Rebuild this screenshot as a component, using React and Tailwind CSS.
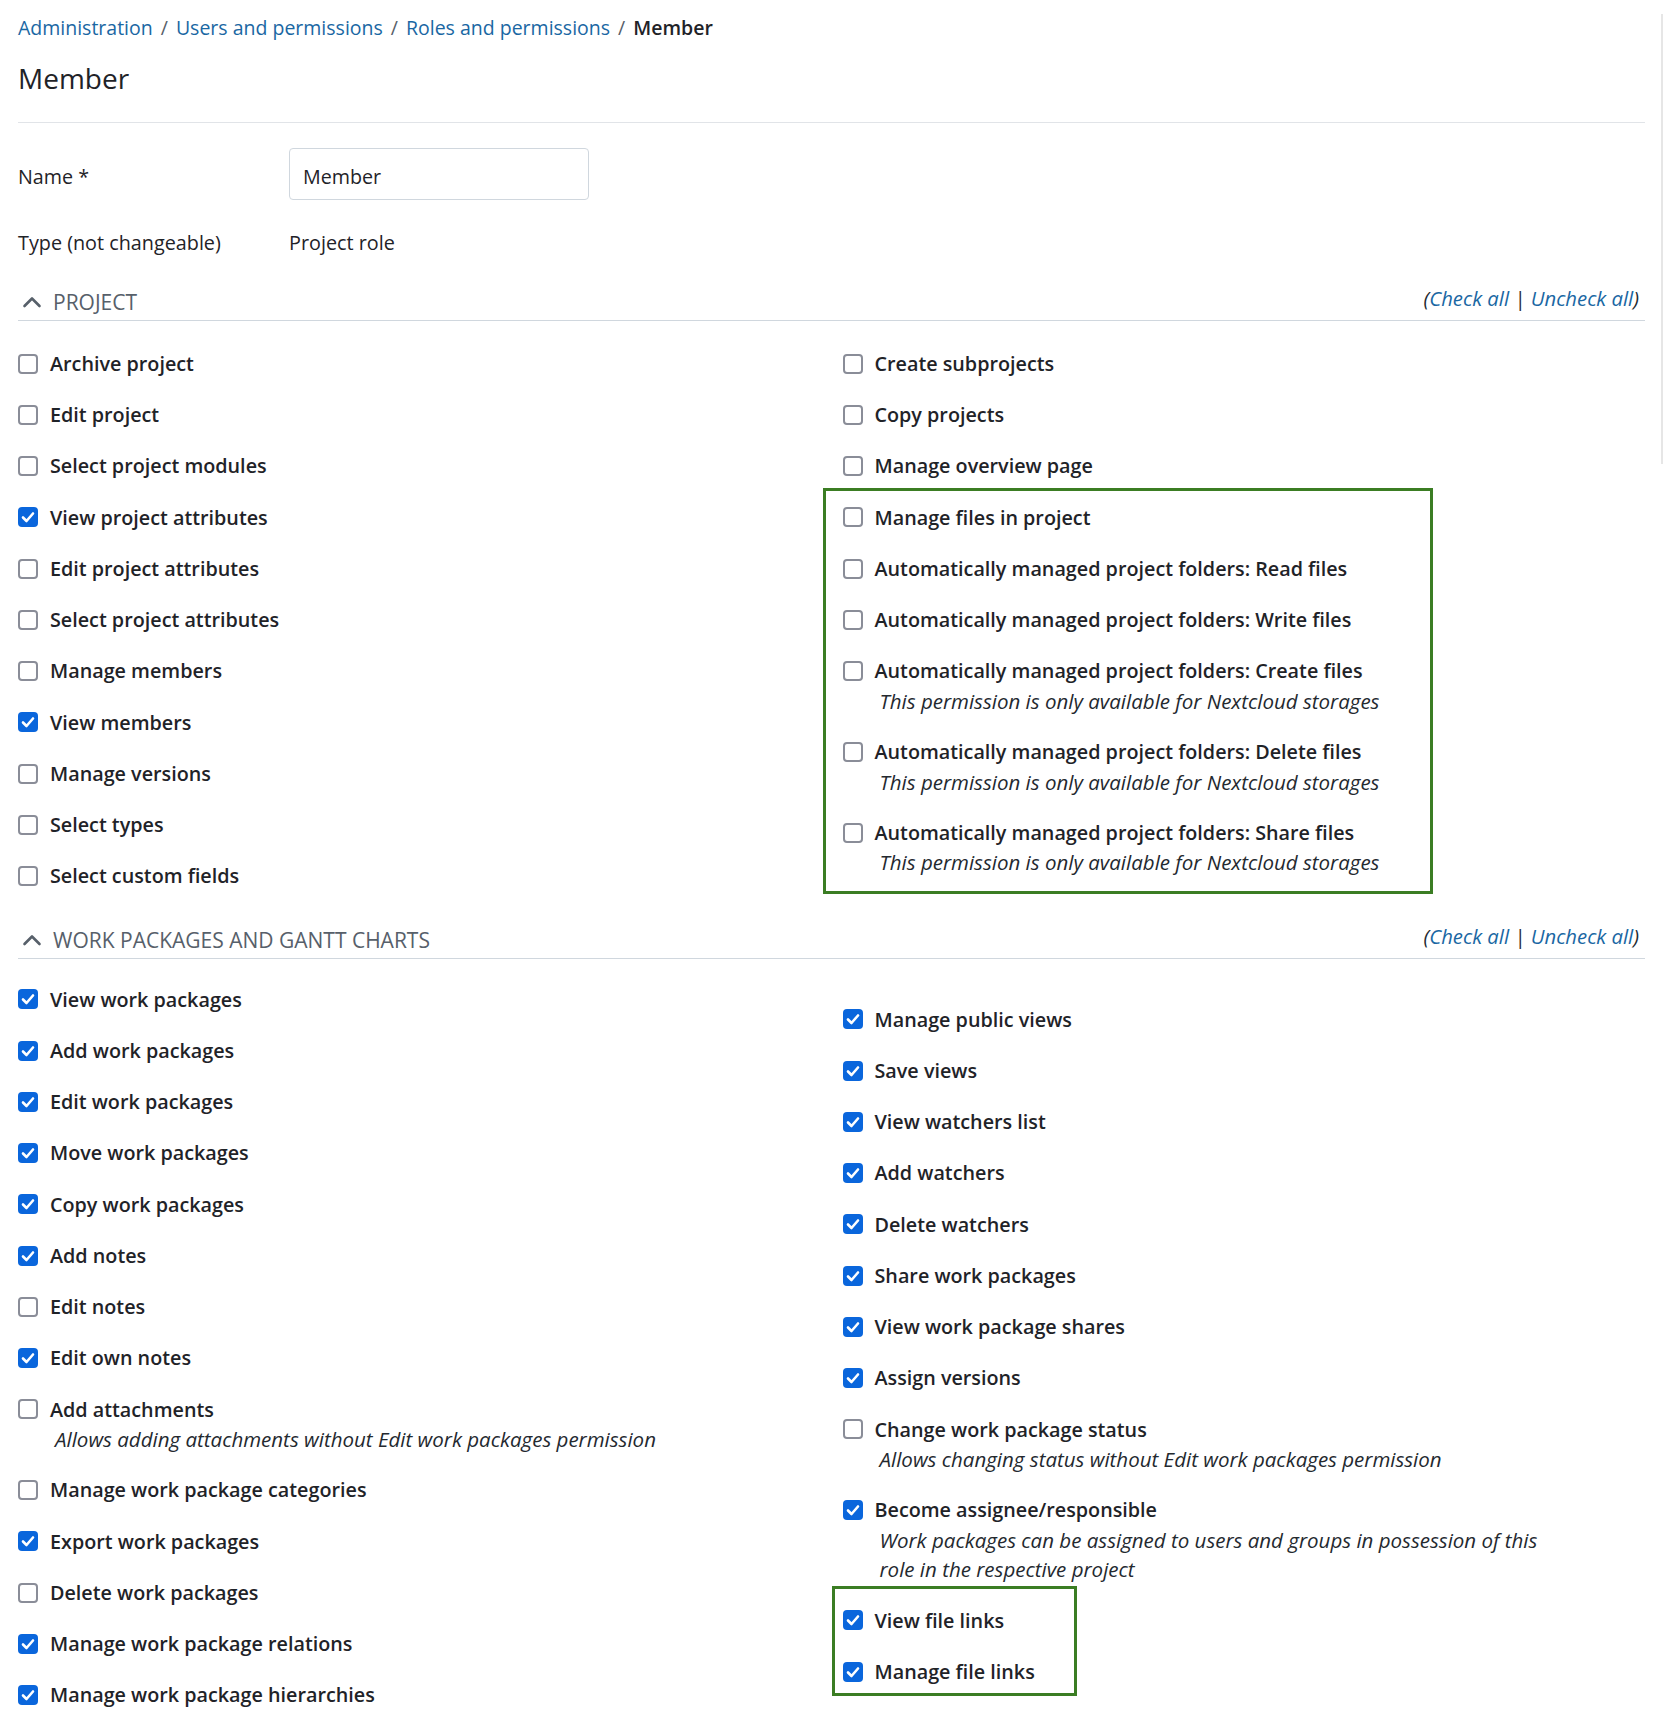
import React from "react";

const sec1Left = [
  ["Archive project", false],
  ["Edit project", false],
  ["Select project modules", false],
  ["View project attributes", true],
  ["Edit project attributes", false],
  ["Select project attributes", false],
  ["Manage members", false],
  ["View members", true],
  ["Manage versions", false],
  ["Select types", false],
  ["Select custom fields", false],
];

const sec1RightTop = [
  ["Create subprojects", false],
  ["Copy projects", false],
  ["Manage overview page", false],
];

const NC = ["This permission is only available for Nextcloud storages"];
const sec1RightBox = [
  ["Manage files in project", false],
  ["Automatically managed project folders: Read files", false],
  ["Automatically managed project folders: Write files", false],
  ["Automatically managed project folders: Create files", false, NC],
  ["Automatically managed project folders: Delete files", false, NC],
  ["Automatically managed project folders: Share files", false, NC],
];

const sec2Left = [
  ["View work packages", true],
  ["Add work packages", true],
  ["Edit work packages", true],
  ["Move work packages", true],
  ["Copy work packages", true],
  ["Add notes", true],
  ["Edit notes", false],
  ["Edit own notes", true],
  ["Add attachments", false, ["Allows adding attachments without Edit work packages permission"]],
  ["Manage work package categories", false],
  ["Export work packages", true],
  ["Delete work packages", false],
  ["Manage work package relations", true],
  ["Manage work package hierarchies", true],
];

const sec2RightTop = [
  ["Manage public views", true],
  ["Save views", true],
  ["View watchers list", true],
  ["Add watchers", true],
  ["Delete watchers", true],
  ["Share work packages", true],
  ["View work package shares", true],
  ["Assign versions", true],
  ["Change work package status", false, ["Allows changing status without Edit work packages permission"]],
  [
    "Become assignee/responsible",
    true,
    ["Work packages can be assigned to users and groups in possession of this", "role in the respective project"],
  ],
];

const sec2RightBox = [
  ["View file links", true],
  ["Manage file links", true],
];

function Box({ checked }) {
  if (checked) {
    return (
      <div className="w-[20px] h-[20px] shrink-0 rounded-[4px] bg-[#0a66dc] flex items-center justify-center">
        <svg width="20" height="20" viewBox="0 0 20 20">
          <polyline points="5,10.5 8.5,14 15,6.5" fill="none" stroke="#ffffff" strokeWidth="2.6" strokeLinecap="round" strokeLinejoin="round" />
        </svg>
      </div>
    );
  }
  return <div className="w-[20px] h-[20px] shrink-0 rounded-[4px] border-2 border-[#8a8d98] bg-white" />;
}

function Item({ item }) {
  const [label, checked, desc] = item;
  return (
    <div className="py-[10px]">
      <div className="flex items-center h-[31.25px]">
        <Box checked={checked} />
        <span className="ml-[12px] text-[19.75px] font-semibold text-[#1f2328] whitespace-nowrap">{label}</span>
      </div>
      {desc &&
        desc.map((d, i) => (
          <div key={i} className="pl-[37px] h-[29.5px] leading-[29.5px] text-[20.5px] italic text-[#24292f] whitespace-nowrap">
            {d}
          </div>
        ))}
    </div>
  );
}

function Heading({ title }) {
  return (
    <div className="flex items-center justify-between h-[34px] pb-[3px] border-b border-[#d0d7de]">
      <div className="flex items-center h-[30px]">
        <svg width="20" height="14" viewBox="0 0 20 14" className="ml-[4px] mr-[11px]">
          <polyline points="2.5,11 10,3.5 17.5,11" fill="none" stroke="#57606a" strokeWidth="2.6" strokeLinecap="round" strokeLinejoin="round" />
        </svg>
        <span className="text-[21px] text-[#57606a] uppercase leading-[30px]">{title}</span>
      </div>
      <div className="italic text-[20.3px] leading-[30px] text-[#24292f] mr-[6px] -mt-[8px]">
        (<span className="text-[#1a67a3]">Check all</span> | <span className="text-[#1a67a3]">Uncheck all</span>)
      </div>
    </div>
  );
}

export default function App() {
  return (
    <div className="relative w-full h-[1731px] overflow-hidden bg-white px-[18px] font-['Open_Sans',sans-serif] text-[#1f2328]">
      <div className="pt-[13px] flex items-center gap-[8px] h-[43px] text-[19.5px] leading-[30px]">
        <span className="text-[#1a67a3]">Administration</span>
        <span className="text-[#57606a]">/</span>
        <span className="text-[#1a67a3]">Users and permissions</span>
        <span className="text-[#57606a]">/</span>
        <span className="text-[#1a67a3]">Roles and permissions</span>
        <span className="text-[#57606a]">/</span>
        <span className="font-semibold text-[#1f2328]">Member</span>
      </div>
      <div className="mt-[15px] text-[28px] leading-[40px] text-[#1f2328]">Member</div>
      <div className="mt-[24px] h-px bg-[#e1e4e8]" />

      <div className="mt-[25px] flex items-center">
        <div className="w-[271px] pt-[6px] text-[19.7px]">Name *</div>
        <div className="w-[300px] h-[52px] border border-[#d0d7de] rounded-[4px] flex items-center pl-[13px] pt-[6px] text-[19.7px]">
          Member
        </div>
      </div>
      <div className="mt-[28px] flex items-center h-[30px] text-[19.8px]">
        <div className="w-[271px]">Type (not changeable)</div>
        <div>Project role</div>
      </div>

      <div className="mt-[29px]">
        <Heading title="Project" />
      </div>
      <div className="mt-[17px] grid grid-cols-2 gap-x-[22px]">
        <div>
          {sec1Left.map((it) => (
            <Item key={it[0]} item={it} />
          ))}
        </div>
        <div>
          {sec1RightTop.map((it) => (
            <Item key={it[0]} item={it} />
          ))}
          <div className="relative">
            <div className="absolute top-[-4px] bottom-[-6px] left-[-20px] w-[610px] border-[3px] border-[#3b7d23] pointer-events-none" />
            {sec1RightBox.map((it) => (
              <Item key={it[0]} item={it} />
            ))}
          </div>
        </div>
      </div>

      <div className="mt-[23px]">
        <Heading title="Work packages and Gantt charts" />
      </div>
      <div className="mt-[15px] grid grid-cols-2 gap-x-[22px]">
        <div>
          {sec2Left.map((it) => (
            <Item key={it[0]} item={it} />
          ))}
        </div>
        <div className="pt-[20px]">
          {sec2RightTop.map((it) => (
            <Item key={it[0]} item={it} />
          ))}
          <div className="relative">
            <div className="absolute top-[-9px] bottom-[1px] left-[-11px] w-[245px] border-[3px] border-[#3b7d23] pointer-events-none" />
            {sec2RightBox.map((it) => (
              <Item key={it[0]} item={it} />
            ))}
          </div>
        </div>
      </div>

      <div className="absolute right-0 top-[14px] w-[2px] h-[450px] bg-[#e6e6e6]" />
    </div>
  );
}
